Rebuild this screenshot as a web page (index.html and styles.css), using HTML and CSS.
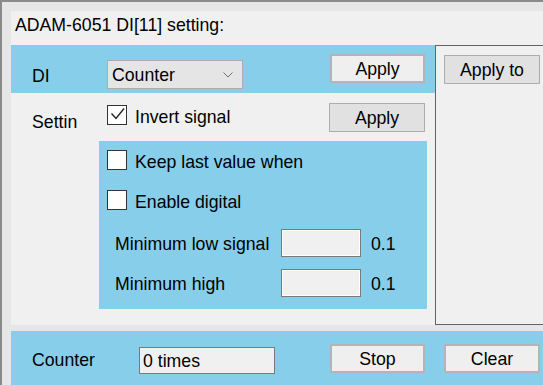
FILE: index.html
```html
<!DOCTYPE html>
<html lang="en">
<head>
  <meta charset="UTF-8" />
  <title>ADAM-6051 DI setting</title>
  <link rel="stylesheet" href="styles.css">
</head>
<body>
  <div class="window">
    <div class="group">
      <div class="title">ADAM-6051 DI[11] setting:</div>

      <div class="content">
        <div class="left">
          <!-- DI mode -->
          <div class="di-row">
            <div class="label">DI</div>
            <div class="select">
              <span>Counter</span>
              <svg class="chevron" width="10" height="6" viewBox="0 0 10 6">
                <path d="M0.5 0.5 L5 5 L9.5 0.5" fill="none" stroke="#707070" stroke-width="1"/>
              </svg>
            </div>
            <button class="btn default">Apply</button>
          </div>

          <!-- Settings -->
          <div class="set-row">
            <div class="label settin">Settin</div>
            <label class="check">
              <span class="box">
                <svg width="18" height="18" viewBox="0 0 18 18">
                  <path d="M3.5 7.5 L8 12.5 L16 2.5" fill="none" stroke="#222" stroke-width="1.4"/>
                </svg>
              </span>
              <span class="text">Invert signal</span>
            </label>
            <button class="btn apply-2">Apply</button>
          </div>

          <div class="inner">
            <label class="check"><span class="box"></span><span class="text">Keep last value when</span></label>
            <label class="check second"><span class="box"></span><span class="text">Enable digital</span></label>
            <div class="field first">
              <span class="field-label">Minimum low signal</span>
              <span class="input"></span>
              <span class="unit">0.1</span>
            </div>
            <div class="field">
              <span class="field-label">Minimum high</span>
              <span class="input"></span>
              <span class="unit">0.1</span>
            </div>
          </div>
        </div>

        <div class="side">
          <button class="btn">Apply to</button>
        </div>
      </div>
    </div>

    <!-- Counter -->
    <div class="counter-bar">
      <div class="counter-label">Counter</div>
      <div class="textbox">0 times</div>
      <button class="btn default stop">Stop</button>
      <button class="btn default clear">Clear</button>
    </div>
  </div>
</body>
</html>
```

FILE: styles.css
```css
* {
  box-sizing: border-box;
}

body {
  margin: 0;
  font-family: 'Liberation Sans', Arial, sans-serif;
  font-size: 17.7px;
  color: #000;
  background-color: #e6e6e6;
  overflow: hidden;
}

.window {
  width: 543px;
  height: 385px;
  border-top: 2px solid #8a8a8a;
  border-left: 2px solid #8a8a8a;
  padding: 9px 0 0 9px;
  background-color: #e6e6e6;
}

.group {
  height: 314px;
  background-color: #f0f0f0;
}

.title {
  height: 34px;
  padding: 4px 0 0 4px;
  line-height: 20px;
}

.content {
  display: flex;
  height: 280px;
}

.left {
  width: 424px;
}

.label {
  width: 75px;
  line-height: 20px;
}

/* DI row */
.di-row {
  display: flex;
  align-items: flex-start;
  height: 48px;
  padding: 0 10px 0 21px;
  background-color: #87ceeb;
}

.di-row .label {
  margin-top: 21px;
}

.select {
  display: flex;
  align-items: center;
  justify-content: space-between;
  width: 136px;
  height: 29px;
  margin-top: 15px;
  padding: 2px 9px 0 4px;
  background-color: #e5e5e5;
  border: 1px solid #adadad;
}

.chevron {
  margin-top: -2px;
}

.btn {
  display: flex;
  align-items: center;
  justify-content: center;
  width: 96px;
  height: 29px;
  padding: 2px 0 0;
  font: inherit;
  color: #000;
  background-color: #e1e1e1;
  border: 1px solid #adadad;
}

.btn.default {
  width: 95px;
  background-color: #efefef;
  border: 2px solid #b4b4b4;
}

.di-row .btn {
  margin-top: 9px;
  margin-left: auto;
}

/* Settings row */
.set-row {
  display: flex;
  align-items: flex-start;
  height: 48px;
  padding: 0 10px 0 21px;
}

.settin {
  margin-top: 19px;
}

.check {
  display: flex;
  align-items: center;
  gap: 8px;
  height: 20px;
  line-height: 20px;
}

.check .text {
  padding-top: 3px;
}

.set-row .check {
  margin-top: 12px;
}

.box {
  display: flex;
  width: 20px;
  height: 20px;
  background-color: #fff;
  border: 1px solid #333;
}

.apply-2 {
  margin-top: 10px;
  margin-left: auto;
}

/* Inner panel */
.inner {
  width: 328px;
  height: 168px;
  margin-left: 88px;
  padding: 9px 0 0 8px;
  background-color: #87ceeb;
}

.inner .second {
  margin-top: 20px;
}

.field {
  display: flex;
  align-items: center;
  height: 28px;
  margin-top: 12px;
  padding-left: 8px;
}

.field.first {
  margin-top: 19px;
}

.field-label,
.unit {
  padding-top: 2px;
}

.field-label {
  width: 166px;
}

.input {
  width: 80px;
  height: 28px;
  margin-right: 10px;
  background-color: #f0f0f0;
  border: 1px solid #7a7a7a;
  box-shadow: inset 0 0 0 1px #fff;
}

/* Right panel */
.side {
  flex: 1;
  padding: 9px 0 0 8px;
  border: 1px solid #646464;
  border-right: none;
}

/* Counter bar */
.counter-bar {
  display: flex;
  align-items: flex-start;
  height: 54px;
  margin-top: 6px;
  padding-left: 21px;
  background-color: #87ceeb;
}

.counter-label {
  width: 107px;
  margin-top: 19px;
  line-height: 20px;
}

.textbox {
  width: 136px;
  height: 27px;
  margin-top: 16px;
  padding: 2px 0 0 3px;
  line-height: 23px;
  background-color: #f0f0f0;
  border: 1px solid #7a7a7a;
}

.stop {
  margin-top: 13px;
  margin-left: 55px;
}

.btn.clear {
  width: 96px;
  margin-top: 13px;
  margin-left: 19px;
}
```
